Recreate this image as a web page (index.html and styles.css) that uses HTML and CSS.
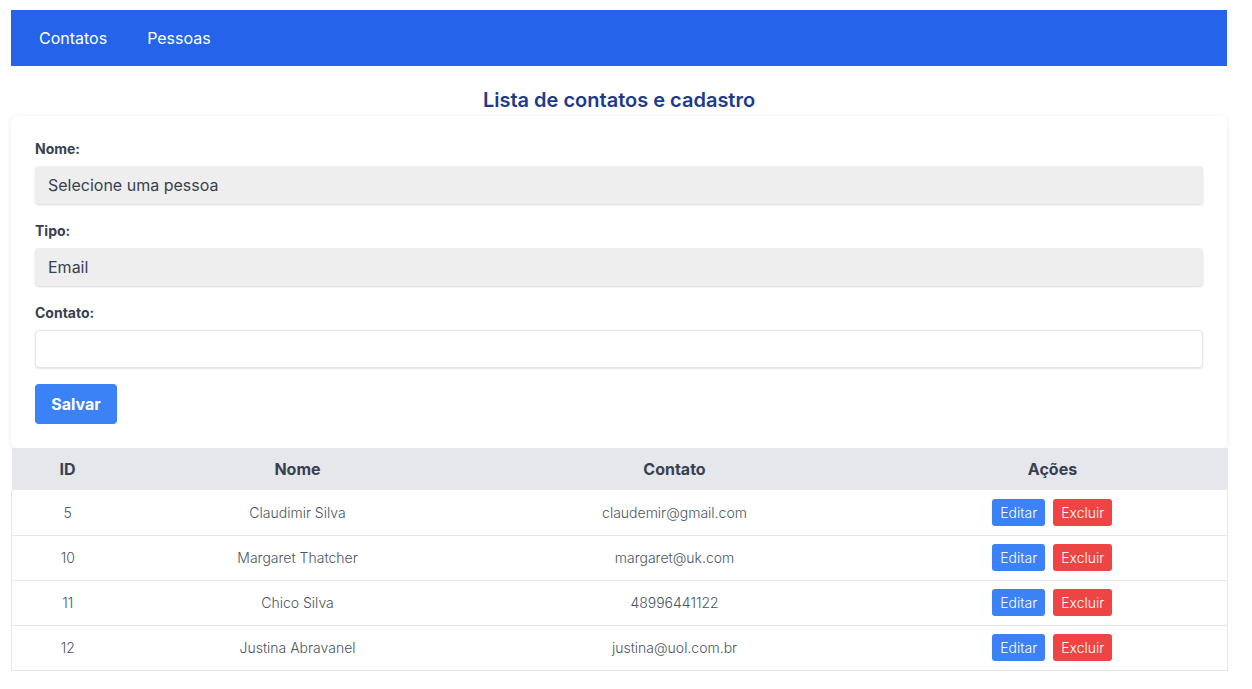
FILE: index.html
```html
<!DOCTYPE html>
<html lang="pt">
<head>
<meta charset="utf-8">
<title>Contatos</title>
<link rel="stylesheet" href="styles.css">
</head>
<body>
<div class="page">
  <nav class="nav">
    <a class="nav-link" href="#">Contatos</a>
    <a class="nav-link" href="#">Pessoas</a>
  </nav>
  <h1 class="title">Lista de contatos e cadastro</h1>
  <form class="card">
    <label class="label">Nome:</label>
    <div class="select">Selecione uma pessoa</div>
    <label class="label">Tipo:</label>
    <div class="select">Email</div>
    <label class="label">Contato:</label>
    <input class="input" type="text">
    <button class="btn-save" type="button">Salvar</button>
  </form>
  <table class="table">
    <colgroup>
      <col class="c-id"><col class="c-nome"><col class="c-contato"><col class="c-acoes">
    </colgroup>
    <thead>
      <tr><th>ID</th><th>Nome</th><th>Contato</th><th>Ações</th></tr>
    </thead>
    <tbody>
      <tr><td>5</td><td>Claudimir Silva</td><td>claudemir@gmail.com</td><td><div class="actions"><button class="btn btn-edit">Editar</button><button class="btn btn-del">Excluir</button></div></td></tr>
      <tr><td>10</td><td>Margaret Thatcher</td><td>margaret@uk.com</td><td><div class="actions"><button class="btn btn-edit">Editar</button><button class="btn btn-del">Excluir</button></div></td></tr>
      <tr><td>11</td><td>Chico Silva</td><td>48996441122</td><td><div class="actions"><button class="btn btn-edit">Editar</button><button class="btn btn-del">Excluir</button></div></td></tr>
      <tr><td>12</td><td>Justina Abravanel</td><td>justina@uol.com.br</td><td><div class="actions"><button class="btn btn-edit">Editar</button><button class="btn btn-del">Excluir</button></div></td></tr>
    </tbody>
  </table>
</div>
</body>
</html>
```
FILE: styles.css
```css
* { box-sizing: border-box; }
html, body { margin: 0; padding: 0; background: #fff; }
body { font-family: Inter, "Noto Sans", sans-serif; color: #374151; }
.page { width: 1216px; margin: 10px 0 0 11px; }
.nav { height: 56px; background: #2563eb; display: flex; align-items: center; padding-left: 28px; gap: 40px; }
.nav-link { color: #fff; text-decoration: none; font-size: 16px; }
.title { margin: 0; height: 50px; display: flex; align-items: flex-end; justify-content: center; padding-bottom: 4px; font-size: 20px; line-height: 24px; font-weight: 600; color: #1e3a8a; }
.card { background: #fff; border-radius: 6px; box-shadow: 0 1px 6px rgba(0,0,0,0.08); padding: 24px; display: flex; flex-direction: column; }
.label { font-size: 14px; font-weight: 700; color: #374151; height: 17px; line-height: 17px; margin-bottom: 9px; }
.select { height: 38px; background: #eeeeee; border-radius: 4px; box-shadow: 0 1px 2px rgba(0,0,0,0.15); padding: 0 13px; display: flex; align-items: center; font-size: 16px; color: #374151; margin-bottom: 18px; }
.input { height: 38px; border: 1px solid #e5e7eb; border-radius: 4px; box-shadow: 0 1px 2px rgba(0,0,0,0.1); background: #fff; margin: 0 0 16px; font: inherit; }
.btn-save { width: 82px; height: 40px; background: #3b82f6; color: #fff; border: 0; border-radius: 4px; font-family: inherit; font-size: 16px; font-weight: 700; }
.table { width: 1216px; border-collapse: collapse; table-layout: fixed; }
.c-id { width: 112px; } .c-nome { width: 348px; } .c-contato { width: 406px; } .c-acoes { width: 350px; }
.table th { background: #e5e7eb; height: 42px; font-size: 16px; font-weight: 700; color: #374151; text-align: center; padding: 0; }
.table td { height: 45px; border-bottom: 1px solid #e5e7eb; text-align: center; font-size: 14px; font-weight: 300; color: #4b5563; padding: 0; }
.table tbody tr td:first-child { border-left: 1px solid #e5e7eb; }
.table tbody tr td:last-child { border-right: 1px solid #e5e7eb; }
.actions { display: flex; justify-content: center; gap: 8px; }
.btn { height: 27px; border: 0; border-radius: 3px; color: #fff; font-family: inherit; font-size: 14px; font-weight: 300; padding: 0 8px; }
.btn-edit { background: #3b82f6; }
.btn-del { background: #ef4444; }
```
